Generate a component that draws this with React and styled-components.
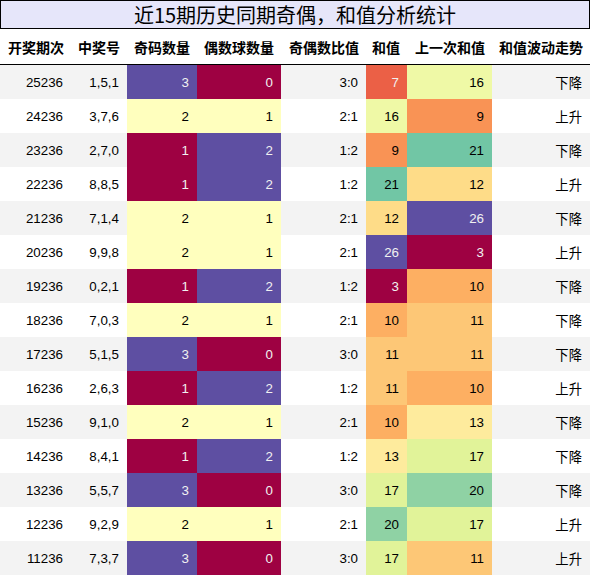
import styled, {createGlobalStyle} from 'styled-components'

const GlobalStyle = createGlobalStyle`
  body {
    margin: 0;
    background: #ffffff;
    font-family: "Liberation Sans", "Noto Sans CJK SC", sans-serif;
  }
`

const columns = [
  {title: '开奖期次'},
  {title: '中奖号'},
  {title: '奇码数量', gradient: true},
  {title: '偶数球数量', gradient: true},
  {title: '奇偶数比值'},
  {title: '和值', gradient: true},
  {title: '上一次和值', gradient: true},
  {title: '和值波动走势'},
]

const rows = [
  ['25236', '1,5,1', 3, 0, '3:0', 7, 16, '下降'],
  ['24236', '3,7,6', 2, 1, '2:1', 16, 9, '上升'],
  ['23236', '2,7,0', 1, 2, '1:2', 9, 21, '下降'],
  ['22236', '8,8,5', 1, 2, '1:2', 21, 12, '上升'],
  ['21236', '7,1,4', 2, 1, '2:1', 12, 26, '下降'],
  ['20236', '9,9,8', 2, 1, '2:1', 26, 3, '上升'],
  ['19236', '0,2,1', 1, 2, '1:2', 3, 10, '下降'],
  ['18236', '7,0,3', 2, 1, '2:1', 10, 11, '下降'],
  ['17236', '5,1,5', 3, 0, '3:0', 11, 11, '下降'],
  ['16236', '2,6,3', 1, 2, '1:2', 11, 10, '上升'],
  ['15236', '9,1,0', 2, 1, '2:1', 10, 13, '下降'],
  ['14236', '8,4,1', 1, 2, '1:2', 13, 17, '下降'],
  ['13236', '5,5,7', 3, 0, '3:0', 17, 20, '下降'],
  ['12236', '9,2,9', 2, 1, '2:1', 20, 17, '上升'],
  ['11236', '7,3,7', 3, 0, '3:0', 17, 11, '上升'],
]

// matplotlib "Spectral" stops
const spectral = [
  [158, 1, 66],
  [213, 62, 79],
  [244, 109, 67],
  [253, 174, 97],
  [254, 224, 139],
  [255, 255, 191],
  [230, 245, 152],
  [171, 221, 164],
  [102, 194, 165],
  [50, 136, 189],
  [94, 79, 162],
]

const spectralAt = x => {
  const idx = Math.min(255, Math.max(0, Math.floor(x * 256)))
  const p = (idx / 255) * (spectral.length - 1)
  const i = Math.min(spectral.length - 2, Math.floor(p))
  const t = p - i
  return spectral[i].map((c, k) => Math.round(c + (spectral[i + 1][k] - c) * t))
}

const luminance = rgb => {
  const [r, g, b] = rgb.map(v => {
    const c = v / 255
    return c <= 0.04045 ? c / 12.92 : ((c + 0.055) / 1.055) ** 2.4
  })
  return 0.2126 * r + 0.7152 * g + 0.0722 * b
}

const ranges = columns.map((col, ci) => {
  if (!col.gradient) return null
  const values = rows.map(r => r[ci])
  return [Math.min(...values), Math.max(...values)]
})

const cellColors = (ci, value) => {
  const range = ranges[ci]
  if (!range) return {}
  const [lo, hi] = range
  const rgb = spectralAt((value - lo) / (hi - lo))
  return {
    $bg: `rgb(${rgb.join(',')})`,
    $fg: luminance(rgb) < 0.408 ? '#f1f1f1' : '#000000',
  }
}

const App = () => (
  <Page>
    <GlobalStyle />
    <TitleBox>近15期历史同期奇偶，和值分析统计</TitleBox>
    <HeadRow>
      {columns.map(col => (
        <HeadCell key={col.title}>{col.title}</HeadCell>
      ))}
    </HeadRow>
    {rows.map((row, ri) => (
      <Row key={row[0]} $striped={ri % 2 === 0}>
        {row.map((value, ci) => (
          <Cell key={ci} {...cellColors(ci, value)}>
            {value}
          </Cell>
        ))}
      </Row>
    ))}
  </Page>
)

export default App

const Page = styled.div`
  width: 590px;
  display: flex;
  flex-direction: column;
`

const TitleBox = styled.div`
  height: 27px;
  border: 1px solid #000000;
  background-color: #e6e6fa;
  font-family: "Noto Sans CJK SC", sans-serif;
  font-size: 20px;
  line-height: 27px;
  text-align: center;
  color: #000000;
`

const grid = `
  display: grid;
  grid-template-columns: 68px 59px 70px 84px 85px 41px 85px 98px;
`

const HeadRow = styled.div`
  ${grid}
  height: 35px;
  border-bottom: 1px solid #000000;
`

const HeadCell = styled.div`
  display: flex;
  align-items: center;
  justify-content: flex-end;
  padding-right: 7px;
  font-size: 14px;
  font-weight: bold;
  color: #000000;
  white-space: nowrap;

  &:first-child {
    padding-right: 4px;
  }
`

const Row = styled.div`
  ${grid}
  height: 34px;
  background-color: ${props => (props.$striped ? '#f3f3f3' : '#ffffff')};
`

const Cell = styled.div`
  display: flex;
  align-items: center;
  justify-content: flex-end;
  padding-right: 8px;
  font-size: 13.33px;
  color: ${props => props.$fg || '#000000'};
  background-color: ${props => props.$bg || 'transparent'};
  white-space: nowrap;

  &:first-child {
    padding-right: 5px;
  }
`
